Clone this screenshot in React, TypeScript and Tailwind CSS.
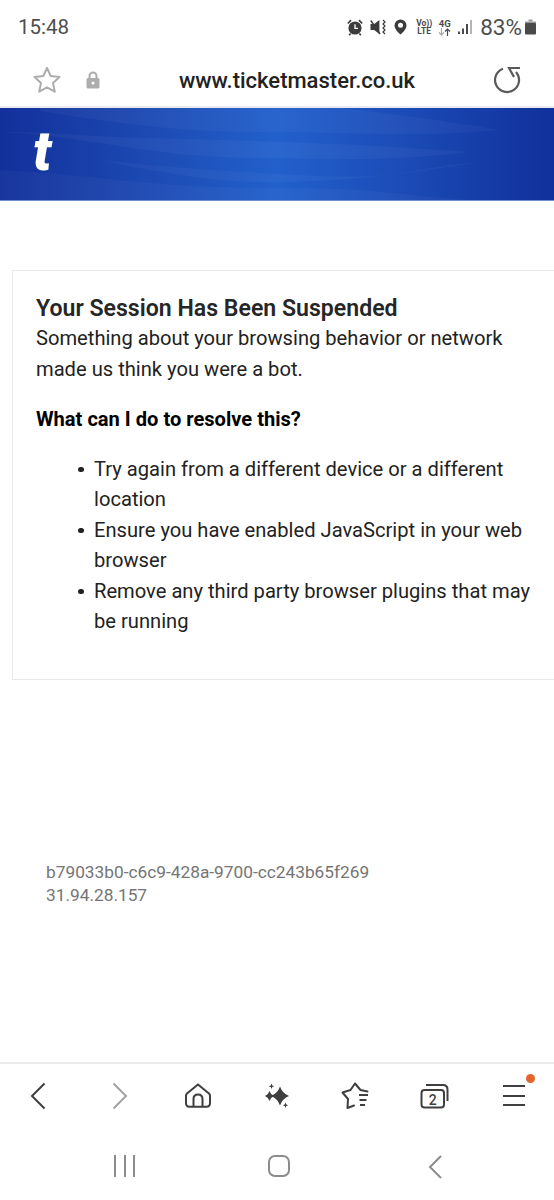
import React from 'react';

const font = { fontFamily: 'Roboto, sans-serif' };

function StatusIcons() {
  return (
    <div className="flex items-center text-[#4a4a4a]">
      {/* alarm */}
      <svg width="16" height="17" viewBox="0 0 16 17" className="mr-[7px]" fill="#3c3c3c">
        <circle cx="8" cy="9" r="6.600" />
        <path d="M0.800 4.500 4 1.200M15.200 4.500 12 1.200M3.600 14.500 2.200 16.200M12.400 14.500 13.800 16.200" stroke="#3c3c3c" strokeWidth="1.700" />
        <path d="M8 5.200v4.200h3" stroke="#fff" strokeWidth="1.300" fill="none" />
      </svg>
      {/* vibrate mute */}
      <svg width="16" height="16" viewBox="0 0 16 16" className="mr-[8px]" fill="#3c3c3c">
        <path d="M0.500 5h3.700L9.400 1v14L4.200 11H0.500z" />
        <path d="M0.800 1.500 10 15" stroke="#3c3c3c" strokeWidth="1.500" />
        <path d="M13 1 15 3 13 5 15 7 13 9 15 11 13 13 15 15" stroke="#3c3c3c" strokeWidth="1.200" fill="none" />
      </svg>
      {/* location */}
      <svg width="13" height="16" viewBox="0 0 13 16" className="mr-[9px]">
        <path d="M6.500 0.500a6 6 0 0 1 6 6c0 3.600-3.600 6.800-6 9-2.400-2.200-6-5.400-6-9a6 6 0 0 1 6-6z" fill="#3c3c3c" />
        <circle cx="6.500" cy="6.300" r="2.500" fill="#fff" />
      </svg>
      <div className="mr-[6px] flex w-[16px] flex-col items-center text-[8.500px] font-bold leading-[8.500px] text-[#4a4a4a]">
        <span>Vo))</span>
        <span>LTE</span>
      </div>
      <div className="mr-[7px] flex w-[13px] flex-col items-center">
        <span className="text-[9.500px] font-bold leading-[9px] text-[#4a4a4a]">4G</span>
        <svg width="13" height="8" viewBox="0 0 13 8" fill="none" strokeWidth="1.200">
          <path d="M3.500 0v7M1 4.500 3.500 7 6 4.500" stroke="#a8a8a8" />
          <path d="M9.500 8V1M7 3.500 9.500 1 12 3.500" stroke="#4a4a4a" />
        </svg>
      </div>
      {/* signal */}
      <svg width="14" height="16" viewBox="0 0 14 16" className="mr-[8px]">
        <rect x="0" y="12.500" width="2" height="2.500" fill="#4a4a4a" />
        <rect x="4" y="9.500" width="2" height="5.500" fill="#4a4a4a" />
        <rect x="8" y="5" width="2" height="10" fill="#4a4a4a" />
        <rect x="12" y="1" width="2" height="14" fill="#b5b5b5" />
      </svg>
      <span className="text-[22.500px] leading-none text-[#4e4e4e]">83%</span>
      {/* battery */}
      <svg width="11" height="16" viewBox="0 0 11 16" className="ml-[3px]">
        <path d="M3.500 0.500h4v2h-4z" fill="#9a9a9a" />
        <rect x="0" y="2.500" width="11" height="2" fill="#9a9a9a" />
        <rect x="0" y="4" width="11" height="11.500" rx="1" fill="#4a4a4a" />
      </svg>
    </div>
  );
}

function Banner() {
  return (
    <div className="relative h-[93px] border-b border-[#6f8fca] bg-[linear-gradient(90deg,#12309a_0%,#1b45ae_22%,#2260cc_50%,#1c4cb8_72%,#10309a_100%)]">
      <svg className="absolute inset-0 h-full w-full" viewBox="0 0 554 92" preserveAspectRatio="none">
        <path d="M40 3C110 14 170 24 260 24S420 30 500 22C440 12 380 4 340 0H40z" fill="#ffffff" opacity="0.035" />
        <path d="M0 24C90 28 140 48 250 50S400 52 470 44L380 38C300 34 230 32 150 30S60 24 0 24z" fill="#ffffff" opacity="0.04" />
        <path d="M0 62C90 66 150 80 270 80S380 86 470 92H0z" fill="#ffffff" opacity="0.03" />
        <path d="M100 52C170 60 240 64 320 68S420 58 480 54C420 64 360 72 290 74S170 66 100 52z" fill="#ffffff" opacity="0.035" />
      </svg>
      <div className="relative pl-[33px] pt-[10px] text-[55px] font-black italic leading-[66px] text-white">t</div>
    </div>
  );
}

function ListItem({ children }: { children: React.ReactNode }) {
  return (
    <li className="relative pl-[58px]">
      <span className="absolute left-[42px] top-[13px] h-[5.500px] w-[5.500px] rounded-full bg-[#222]" />
      {children}
    </li>
  );
}

function BottomNav() {
  return (
    <div className="grid h-[69px] grid-cols-7 items-center justify-items-center border-t-2 border-[#ececec] pb-[4px]">
      <svg width="16" height="28" viewBox="0 0 16 28" fill="none" stroke="#3f3f3f" strokeWidth="2" className="mr-[3px]">
        <path d="M14.500 1.500 2 14l12.500 12.500" />
      </svg>
      <svg width="16" height="28" viewBox="0 0 16 28" fill="none" stroke="#a3a3a3" strokeWidth="2" className="ml-[2px]">
        <path d="M1.500 1.500 14 14 1.500 26.500" />
      </svg>
      <svg width="26" height="25" viewBox="0 0 26 25" fill="none" stroke="#3f3f3f" strokeWidth="2">
        <path d="M13 1.500 2 10.500c-.7.600-1 1.200-1 2.200V20c0 2.200 1.300 3.800 3.500 3.800h17c2.200 0 3.500-1.600 3.500-3.800v-7.300c0-1-.3-1.600-1-2.200z" />
        <path d="M8.500 23.800V16c0-2.800 1.700-4.500 4.500-4.500s4.500 1.700 4.500 4.500v7.800" />
      </svg>
      <svg width="24" height="26" viewBox="0 0 24 26" fill="#3f3f3f" className="ml-[1px]">
        <path d="M15 3.500Q17.500 10.500 24 13 17.500 15.500 15 22.500 12.500 15.500 6 13 12.500 10.500 15 3.500z" />
        <path d="M4.500 8Q5.500 11.500 9 13 5.500 14.500 4.500 18 3.500 14.500 0 13 3.500 11.500 4.500 8z" />
        <path d="M6.500 .5l.8 1.900 1.900.8-1.900.8-.8 1.900-.8-1.900-1.900-.8 1.900-.8z" />
        <path d="M20.500 19.500l.8 1.900 1.900.8-1.900.8-.8 1.900-.8-1.900-1.900-.8 1.900-.8z" />
      </svg>
      <svg width="28" height="28" viewBox="0 0 28 28" fill="none" stroke="#3f3f3f" strokeWidth="2" strokeLinejoin="round" strokeLinecap="round" className="mr-[2px]">
        <path d="M26.500 9.500 19.500 8 14 1.500 9.500 8 1.500 10.500 7 17l-.5 9 6.500-2.500" />
        <path d="M18 13h9M18.500 18h7M19 23h5" strokeLinecap="butt" />
      </svg>
      <svg width="29" height="26" viewBox="0 0 29 26" fill="none" stroke="#3f3f3f" strokeWidth="2" className="mr-[2px]">
        <rect x="1.500" y="7" width="22.500" height="17.500" rx="3" />
        <path d="M6 2h17c3 0 4.500 1.500 4.500 4.500V18" />
        <text x="12.800" y="21.500" textAnchor="middle" fontSize="14" fontWeight="500" fill="#3f3f3f" stroke="none" style={font}>2</text>
      </svg>
      <div className="relative flex h-[21px] w-[22px] flex-col justify-between">
        <span className="h-[2px] bg-[#3f3f3f]" />
        <span className="h-[2px] bg-[#3f3f3f]" />
        <span className="h-[2px] bg-[#3f3f3f]" />
        <span className="absolute right-[-10px] top-[-11px] h-[9px] w-[9px] rounded-full bg-[#e2652c]" />
      </div>
    </div>
  );
}

function SystemNav() {
  return (
    <div className="flex h-[69px] items-start pt-[24px]">
      <div className="ml-[114px] flex h-[22px] w-[21px] justify-between">
        <span className="w-[2px] bg-[#8c8c8c]" />
        <span className="w-[2px] bg-[#8c8c8c]" />
        <span className="w-[2px] bg-[#8c8c8c]" />
      </div>
      <div className="ml-[133px] h-[22px] w-[22px] rounded-[7px] border-2 border-[#8c8c8c]" />
      <svg width="14" height="24" viewBox="0 0 14 24" fill="none" stroke="#8c8c8c" strokeWidth="2" className="ml-[138px]">
        <path d="M13 1 2 12l11 11" />
      </svg>
    </div>
  );
}

export default function App() {
  return (
    <div className="relative flex h-[1200px] w-[554px] flex-col overflow-hidden bg-white" style={font}>
      {/* status bar */}
      <div className="flex h-[54px] items-center justify-between pl-[18px] pr-[18px]">
        <span className="text-[20.500px] leading-none text-[#4e4e4e]">15:48</span>
        <StatusIcons />
      </div>

      {/* url bar */}
      <div className="flex h-[54px] items-center justify-between border-b-2 border-[#e9ebee] pl-[32px] pr-[32px]">
        <div className="flex items-center">
          <svg width="30" height="30" viewBox="0 0 30 30" fill="none" stroke="#adadad" strokeWidth="2" strokeLinejoin="round">
            <path d="M15 3l3.700 8 8.800 1-6.500 6 1.800 8.700L15 22.300l-7.800 4.400L9 18l-6.500-6 8.800-1z" />
          </svg>
          <svg width="14" height="18" viewBox="0 0 14 18" className="ml-[24px]">
            <path d="M3.500 8V5a3.500 3.500 0 0 1 7 0v3" fill="none" stroke="#adadad" strokeWidth="2" />
            <rect x="0.500" y="7" width="13" height="10.500" rx="1.500" fill="#adadad" />
            <circle cx="7" cy="12" r="1.500" fill="#fff" />
          </svg>
        </div>
        <span className="text-[22px] font-medium text-[#222]">www.ticketmaster.co.uk</span>
        <svg width="28" height="28" viewBox="0 0 28 28" fill="none" stroke="#5a5a5a" strokeWidth="2.200">
          <path d="M9 2.700A12 12 0 1 0 22 6" />
          <path d="M26 2H15l5 9" />
        </svg>
      </div>

      <Banner />

      <main className="flex-1">
        <div className="ml-[12px] mt-[69px] h-[410px] border border-r-0 border-[#e9e9e9] pl-[23px] pt-[24px] text-[20.150px] leading-[30.500px] text-[#222]">
          <h1 className="text-[23.100px] font-semibold leading-[28px] text-[#262626]">Your Session Has Been Suspended</h1>
          <p className="w-[490px]">Something about your browsing behavior or network made us think you were a bot.</p>
          <p className="mt-[20px] text-[20.100px] font-bold text-black">What can I do to resolve this?</p>
          <ul className="mt-[19px] w-[505px]">
            <ListItem>Try again from a different device or a different location</ListItem>
            <ListItem>Ensure you have enabled JavaScript in your web browser</ListItem>
            <ListItem>Remove any third party browser plugins that may be running</ListItem>
          </ul>
        </div>
        <div className="ml-[46px] mt-[181px] text-[17.300px] leading-[23px] text-[#757575]">
          <div>b79033b0-c6c9-428a-9700-cc243b65f269</div>
          <div>31.94.28.157</div>
        </div>
      </main>

      <BottomNav />
      <SystemNav />
    </div>
  );
}
